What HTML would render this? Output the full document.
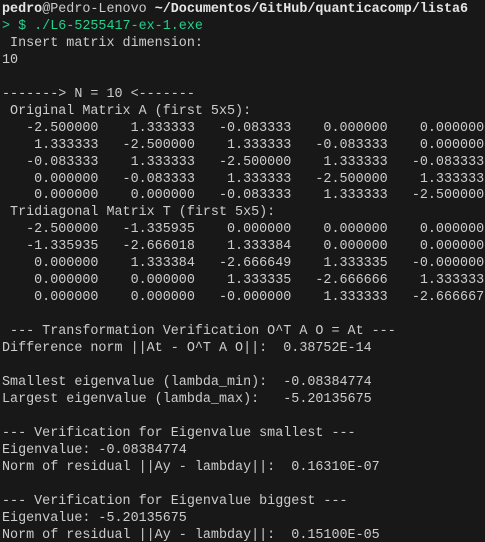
<!DOCTYPE html>
<html><head><meta charset="utf-8"><style>
html,body{margin:0;padding:0;background:#181818;width:485px;height:542px;overflow:hidden}
pre{margin:0;padding:2px 0 0 2px;font-family:"Liberation Mono",monospace;font-size:13.4px;line-height:16.95px;color:#cccccc;white-space:pre}
.b{font-weight:bold;color:#e5e5e5}
.g{color:#23d18b}
</style></head><body><pre><span class="b">pedro</span>@Pedro-Lenovo <span class="b">~/Documentos/GitHub/quanticacomp/lista6</span>
<span class="g">&gt; $ ./L6-5255417-ex-1.exe</span>
 Insert matrix dimension:
10

-------&gt; N = 10 &lt;-------
 Original Matrix A (first 5x5):
   -2.500000    1.333333   -0.083333    0.000000    0.000000
    1.333333   -2.500000    1.333333   -0.083333    0.000000
   -0.083333    1.333333   -2.500000    1.333333   -0.083333
    0.000000   -0.083333    1.333333   -2.500000    1.333333
    0.000000    0.000000   -0.083333    1.333333   -2.500000
 Tridiagonal Matrix T (first 5x5):
   -2.500000   -1.335935    0.000000    0.000000    0.000000
   -1.335935   -2.666018    1.333384    0.000000    0.000000
    0.000000    1.333384   -2.666649    1.333335   -0.000000
    0.000000    0.000000    1.333335   -2.666666    1.333333
    0.000000    0.000000   -0.000000    1.333333   -2.666667

 --- Transformation Verification O^T A O = At ---
Difference norm ||At - O^T A O||:  0.38752E-14

Smallest eigenvalue (lambda_min):  -0.08384774
Largest eigenvalue (lambda_max):   -5.20135675

--- Verification for Eigenvalue smallest ---
Eigenvalue: -0.08384774
Norm of residual ||Ay - lambday||:  0.16310E-07

--- Verification for Eigenvalue biggest ---
Eigenvalue: -5.20135675
Norm of residual ||Ay - lambday||:  0.15100E-05</pre></body></html>
